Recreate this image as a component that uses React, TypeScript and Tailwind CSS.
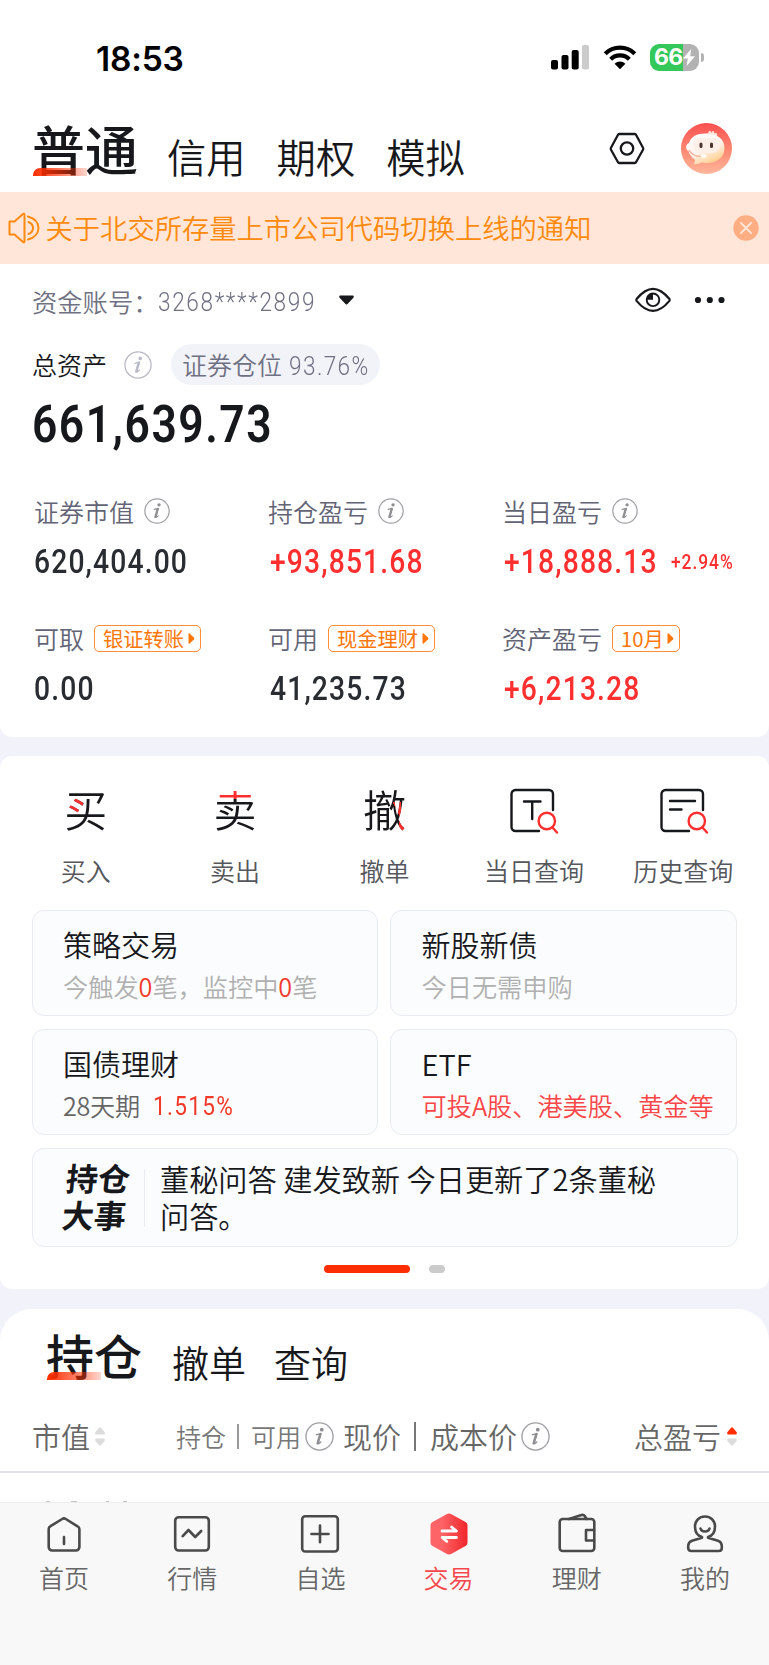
import React from "react";

const CJK = "font-['Noto_Sans_CJK_SC',sans-serif]";

function Num({ children, box, cls }: { children: string; box: string; cls: string }) {
  return (
    <span className={`block shrink-0 ${box}`}>
      <span className={`block w-max origin-left whitespace-nowrap font-[Roboto,sans-serif] leading-none ${cls}`}>{children}</span>
    </span>
  );
}

function Info({ cls, stroke = "#a0a0a4", fill = "#8e8e92" }: { cls: string; stroke?: string; fill?: string }) {
  return (
    <svg viewBox="0 0 28 28" className={`shrink-0 ${cls}`} fill="none">
      <circle cx="14" cy="14" r="13.1" stroke={stroke} strokeWidth="1.3" />
      <circle cx="16.2" cy="7.4" r="1.8" fill={fill} />
      <path d="M11 12.3c1.5-.2 3-.8 4.4-1.2l-2.6 8.6c-.3 1.2.3 1.400 1 .9l1.500-1.400" stroke={fill} strokeWidth="1.3" strokeLinecap="round" strokeLinejoin="round" />
      <path d="M14.800 11.800 12.200 20.500" stroke={fill} strokeWidth="2.400" strokeLinecap="round" />
    </svg>
  );
}

function StatusBar() {
  return (
    <div className="flex h-[115px] items-start pt-[40px]">
      <div className="ml-[96px] w-[120px] pt-px font-[Inter,sans-serif] text-[33.5px] leading-[36px] font-semibold tracking-[-0.2px] text-black">18:53</div>
      <svg className="mt-[5px] ml-[335px] h-[25px] w-[39px]" viewBox="0 0 39 25">
        <rect x="0" y="15" width="7" height="9.5" rx="2" />
        <rect x="10.5" y="10" width="7" height="14.5" rx="2" />
        <rect x="20.7" y="5" width="7" height="19.5" rx="2" />
        <rect x="31" y="0" width="7" height="24.5" rx="2" fill="#cbcbcb" />
      </svg>
      <svg className="mt-[5px] ml-[13px] h-[25px] w-[34px]" viewBox="0 0 34 25" fill="none" stroke="#000">
        <path d="M2.2 8.7a21 21 0 0 1 29.6 0" strokeWidth="4.2" />
        <path d="M7.7 14.2a13.2 13.2 0 0 1 18.6 0" strokeWidth="4.2" />
        <path d="M17 24.2l-5.4-5.5a7.7 7.7 0 0 1 10.8 0z" fill="#000" stroke="none" />
      </svg>
      <div className="mt-[4px] ml-[13px] flex h-[27px] items-center">
        <div className="flex h-[27px] w-[49px] items-center overflow-hidden rounded-[9px] bg-[linear-gradient(90deg,#34c759_0_33px,#b2b2b2_33px)] pl-[4px]">
          <span className="font-[Inter,sans-serif] text-[23px] leading-none font-bold tracking-[-0.8px] text-white">66</span>
          <svg className="ml-[1px] h-[17px] w-[12px]" viewBox="0 0 12 17">
            <path d="M8.2 0 0 9.6h4.8L3.6 17 12 7.2H7.2z" fill="#fff" />
          </svg>
        </div>
        <div className="ml-[2px] h-[9px] w-[2.5px] rounded-r-full bg-[#b2b2b2]" />
      </div>
    </div>
  );
}

function Header() {
  return (
    <div className="flex h-[77px] items-start">
      <div className="relative ml-[32px] h-[64px] w-[106px] shrink-0">
        <div className="pt-[6px] text-[53px] leading-[54px] font-medium text-[#17181c]">普通</div>
        <div className="absolute top-[53px] left-[1px] h-[8px] w-[54px] rounded-tl-[7px] bg-[linear-gradient(90deg,#ff2d00,#ff2d0099_55%,#ff2d0030)]" />
      </div>
      <div className="mt-[21px] ml-[29px] flex gap-[31px] text-[39.3px] leading-[40px] font-[350] text-[#17181c]">
        <span>信用</span>
        <span>期权</span>
        <span>模拟</span>
      </div>
      <svg className="mt-[17px] ml-[144px] h-[34px] w-[36px] shrink-0" viewBox="0 0 36 34" fill="none" stroke="#17181c" strokeWidth="2.3" strokeLinejoin="round">
        <path d="M10.2 2h15.6a1.5 1.5 0 0 1 1.2.8l7 12.9a2 2 0 0 1 0 2l-7 12.5a1.5 1.5 0 0 1-1.2.8H10.2a1.5 1.5 0 0 1-1.2-.8L2 17.700a2 2 0 0 1 0-2L9 2.800A1.500 1.500 0 0 1 10.200 2z" />
        <circle cx="18" cy="16.500" r="6.200" />
      </svg>
      <svg className="mt-[8px] ml-[36px] h-[51px] w-[51px] shrink-0" viewBox="0 0 51 51">
        <defs>
          <linearGradient id="av" x1="0" y1="0" x2="0" y2="1">
            <stop offset="0" stopColor="#fb4f4f" />
            <stop offset=".55" stopColor="#ff8a74" />
            <stop offset="1" stopColor="#ffb79c" />
          </linearGradient>
          <linearGradient id="face" x1="0" y1="0" x2=".6" y2="1">
            <stop offset="0" stopColor="#fff" />
            <stop offset=".6" stopColor="#fff3ee" />
            <stop offset="1" stopColor="#ffd08f" />
          </linearGradient>
        </defs>
        <circle cx="25.500" cy="25.500" r="25.500" fill="url(#av)" />
        <path d="M25 13c0-3 1.500-3.500 2-1.500.3-4 2.500-5 3.300-1.500 1.200-3 3.200-2.500 3 .5 2-1 3.500 0 2.700 2.500z" fill="#ffe3da" />
        <path d="M24 10.500c12 0 19.500 5 19.500 14.500S36 40 25 40c-2 0-3.500-.2-5-.5-2 1.500-4.500 2-7.500 1.500 1-1 1.500-2.500 1.500-4C10.500 34 8 31 7.500 28c-3-1-3.500-6.500.5-8 2-6.500 8-9.500 16-9.500z" fill="url(#face)" />
        <rect x="12" y="15" width="27" height="15" rx="7.500" fill="#ffefe9" />
        <rect x="18.500" y="19.500" width="3" height="5.500" rx="1.500" fill="#4a3330" />
        <rect x="29" y="19.500" width="3" height="5.500" rx="1.500" fill="#4a3330" />
        <path d="M8 27c2 4 7 7 14 6.500" stroke="#ffab94" strokeWidth="1.300" fill="none" />
        <ellipse cx="22.500" cy="33" rx="3" ry="1.700" fill="#fff" />
      </svg>
    </div>
  );
}

function Notice() {
  return (
    <div className="flex h-[72px] items-center bg-[#ffe6d8]">
      <svg className="ml-[8px] h-[32px] w-[32px] shrink-0" viewBox="0 0 32 32" fill="none" stroke="#ff8a0c" strokeWidth="2" strokeLinejoin="round" strokeLinecap="round">
        <path d="M1.500 9.500h5L15 2c.8-.6 1.500-.3 1.500.6v26.800c0 .9-.7 1.200-1.500.6l-8.500-7.500h-5z" />
        <path d="M20 4.500c14 4 14 19 0 23M20.500 10c6 2.500 6 9.500 0 12" />
      </svg>
      <span className="ml-[5.500px] pb-px text-[27.300px] leading-none font-[350] whitespace-nowrap text-[#ff8a0c]">关于北交所存量上市公司代码切换上线的通知</span>
      <svg className="mr-[10px] ml-auto h-[26px] w-[26px] shrink-0" viewBox="0 0 26 26">
        <circle cx="13" cy="13" r="12.700" fill="#ffad82" />
        <path d="M8 8l10 10M18 8 8 18" stroke="#ffe6d8" strokeWidth="1.900" strokeLinecap="round" />
      </svg>
    </div>
  );
}

const Play = () => (
  <svg className="h-[11px] w-[7px] shrink-0" viewBox="0 0 7 11">
    <path d="M.5 1v9c0 .7.700.900 1.200.5l4.400-4.300a1 1 0 0 0 0-1.400L1.700.5C1.200.1.500.300.500 1z" fill="#ff7708" />
  </svg>
);

function Tag({ children, cls }: { children: React.ReactNode; cls: string }) {
  return (
    <span className={`ml-[10px] flex h-[27px] items-center justify-between rounded-[5px] border border-[#ff8d38] pr-[5px] pl-[8px] text-[20.300px] leading-none font-normal text-[#ff7708] ${cls}`}>
      {children}
      <Play />
    </span>
  );
}

const LABEL = "flex items-center whitespace-nowrap text-[25px] leading-none font-[350] text-[#626475]";
const VAL = "text-[32.5px] font-medium tracking-[1.300px] scale-x-[0.870]";

function Account() {
  return (
    <section className="h-[473px] rounded-b-[12px] bg-white">
      <div className="flex h-[76px] items-center pl-[32px] text-[25.300px] leading-none font-[350] text-[#6f7182]">
        <span className="w-[126px] whitespace-nowrap">资金账号：</span>
        <Num box="w-[156px]" cls="text-[26px] tracking-[1.850px] scale-x-[0.870] font-[350]">3268****2899</Num>
        <svg className="mb-[4px] ml-[25px] h-[10px] w-[15px]" viewBox="0 0 15 10">
          <path d="M1.500.5h12c1.200 0 1.700 1.300.9 2.200L9 8.600a2 2 0 0 1-3 0L.6 2.700C-.2 1.800.3.500 1.500.500z" fill="#17181c" />
        </svg>
        <svg className="mb-[4px] ml-[281px] h-[26px] w-[36px]" viewBox="0 0 36 26" fill="none" stroke="#17181c" strokeWidth="2.200">
          <path d="M1.800 11.700C6.500 6 11.500 1.800 18 1.800S29.500 6 34.200 11.700a2 2 0 0 1 0 2.400C29.500 19.800 24.500 23.800 18 23.800S6.500 19.800 1.800 14.100a2 2 0 0 1 0-2.400z" />
          <circle cx="18" cy="12.800" r="6.300" strokeWidth="1.900" />
          <path d="M18 6.500v6.300h-6.300A6.300 6.300 0 0 1 18 6.500z" fill="#17181c" stroke="none" />
        </svg>
        <svg className="mb-[4px] ml-[23px] h-[8px] w-[32px]" viewBox="0 0 32 8" fill="#17181c">
          <circle cx="4" cy="4" r="3.100" />
          <circle cx="15.800" cy="4" r="3.100" />
          <circle cx="27.500" cy="4" r="3.100" />
        </svg>
      </div>
      <div className="flex h-[49px] items-center pl-[32px] text-[25px] leading-none">
        <span className="w-[75px] font-[350] text-[#17181c]">总资产</span>
        <Info cls="ml-[17px] h-[28px] w-[28px]" stroke="#b9bac6" fill="#b9bac6" />
        <div className="ml-[19px] flex h-[41px] w-[209px] items-center rounded-full bg-[#f2f3f9] pl-[11px] font-[350] text-[#6f7182]">
          <span>证券仓位</span>
          <Num box="ml-[7px] w-[80px] pt-[3px]" cls="text-[26px] tracking-[1.600px] scale-x-[0.870] font-[350]">93.76%</Num>
        </div>
      </div>
      <div className="flex h-[70px] items-center pl-[32px]">
        <Num box="w-[260px]" cls="text-[51px] tracking-[1.750px] scale-x-[0.870] font-semibold text-[#17181c]">661,639.73</Num>
      </div>
      <div className="grid grid-cols-[234px_234px_1fr] pt-[36px] pl-[34px] text-[#292c30]">
        <div className={`h-[32px] ${LABEL}`}>证券市值<Info cls="ml-[10px] h-[26px] w-[26px]" /></div>
        <div className={`h-[32px] ${LABEL}`}>持仓盈亏<Info cls="ml-[10px] h-[26px] w-[26px]" /></div>
        <div className={`h-[32px] ${LABEL}`}>当日盈亏<Info cls="ml-[10px] h-[26px] w-[26px]" /></div>
        <div className="flex h-[66px] items-center pt-[4px]"><Num box="w-[160px]" cls={VAL}>620,404.00</Num></div>
        <div className="flex h-[66px] items-center pt-[4px] text-[#ff2f2f]"><Num box="ml-[2px] w-[160px]" cls={VAL}>+93,851.68</Num></div>
        <div className="flex h-[66px] items-center pt-[4px] text-[#ff2f2f]">
          <Num box="ml-[2px] w-[160px]" cls={VAL}>+18,888.13</Num>
          <Num box="ml-[7px] w-[60px]" cls="text-[20px] tracking-[1.100px] scale-x-[0.870] font-medium">+2.94%</Num>
        </div>
        <div className={`mt-[26px] h-[38px] ${LABEL}`}>可取<Tag cls="w-[107px]">银证转账</Tag></div>
        <div className={`mt-[26px] h-[38px] ${LABEL}`}>可用<Tag cls="w-[107px]">现金理财</Tag></div>
        <div className={`mt-[26px] h-[38px] ${LABEL}`}>资产盈亏<Tag cls="w-[68px]">10月</Tag></div>
        <div className="flex h-[60px] items-center pt-[4px]"><Num box="w-[160px]" cls={VAL}>0.00</Num></div>
        <div className="flex h-[60px] items-center pt-[4px]"><Num box="ml-[2px] w-[160px]" cls={VAL}>41,235.73</Num></div>
        <div className="flex h-[60px] items-center pt-[4px] text-[#ff2f2f]"><Num box="ml-[2px] w-[160px]" cls={VAL}>+6,213.28</Num></div>
      </div>
    </section>
  );
}

function QueryIcon({ children }: { children: React.ReactNode }) {
  return (
    <svg className="h-[48px] w-[50px]" viewBox="0 0 50 48" fill="none" stroke="#17181c" strokeWidth="2.400" strokeLinecap="round">
      <path d="M30 43H6.500a4 4 0 0 1-4-4V6a4 4 0 0 1 4-4H40a4 4 0 0 1 4 4v16" />
      {children}
      <g stroke="#ff2f2f">
        <circle cx="37.800" cy="33" r="8.200" />
        <path d="M43.500 39.500 48 44.500" />
      </g>
    </svg>
  );
}

const GLYPH = "h-[46px] bg-clip-text text-[43px] leading-[40px] font-[350] text-transparent";

function Actions() {
  return (
    <div className="grid grid-cols-5 px-[11px] pt-[32px] text-center text-[25px] leading-none font-[350] text-[#55575c]">
      <div>
        <div className={`mx-auto w-[43px] ${GLYPH} bg-[linear-gradient(#ff2f2f,#ff2f2f),linear-gradient(#17181c,#17181c)] bg-[size:19px_15px,100%_100%] bg-[position:0px_9px,0px_0px] bg-no-repeat`}>买</div>
        <div className="pt-[24px]">买入</div>
      </div>
      <div>
        <div className={`mx-auto w-[43px] ${GLYPH} bg-[linear-gradient(#ff2f2f_0_11px,#17181c_11px)]`}>卖</div>
        <div className="pt-[24px]">卖出</div>
      </div>
      <div>
        <div className={`mx-auto w-[43px] ${GLYPH} bg-[linear-gradient(#ff2f2f,#ff2f2f),linear-gradient(64deg,transparent_50%,#ff2f2f_50%),linear-gradient(#17181c,#17181c)] bg-[size:8px_14px,9px_16px,100%_100%] bg-[position:36px_29px,29px_14px,0px_0px] bg-no-repeat`}>撤</div>
        <div className="pt-[24px]">撤单</div>
      </div>
      <div>
        <div className="flex h-[48px] justify-center pl-[1px]">
          <QueryIcon><path d="M15 13.500h16.500M23.200 13.500V31" /></QueryIcon>
        </div>
        <div className="pt-[22px]">当日查询</div>
      </div>
      <div>
        <div className="flex h-[48px] justify-center pl-[1px]">
          <QueryIcon><path d="M11 13H36M11 21.500h11.500" /></QueryIcon>
        </div>
        <div className="pt-[22px]">历史查询</div>
      </div>
    </div>
  );
}

function Card({ title, children }: { title: string; children: React.ReactNode }) {
  return (
    <div className="h-[106px] rounded-[12px] border border-[#e9eaf2] bg-[#fbfcfe] pt-[17px] pl-[30.500px] whitespace-nowrap">
      <div className="text-[29px] leading-[32px] font-[350] text-[#17181c]">{title}</div>
      <div className="mt-[10px] text-[25.200px] leading-[32px] font-[350]">{children}</div>
    </div>
  );
}

function Services() {
  return (
    <section className="mt-[19px] h-[533px] rounded-[12px] bg-white">
      <Actions />
      <div className="mt-[27px] ml-[31.500px] grid w-[705px] grid-cols-2 gap-x-[12px] gap-y-[13px]">
        <Card title="策略交易">
          <span className="text-[#b0b0b0]">今触发<span className="text-[#f23a2a]">0</span>笔，监控中<span className="text-[#f23a2a]">0</span>笔</span>
        </Card>
        <Card title="新股新债"><span className="text-[#b0b0b0]">今日无需申购</span></Card>
        <Card title="国债理财">
          <div className="flex items-center text-[#666]">
            <span className="w-[78px] tracking-[-0.300px]">28天期</span>
            <Num box="ml-[12px] w-[90px] pt-[2px]" cls="text-[26px] tracking-[1.500px] scale-x-[0.870] font-normal text-[#f23a2a]">1.515%</Num>
          </div>
        </Card>
        <Card title="ETF"><span className="text-[#fa4646]">可投A股、港美股、黄金等</span></Card>
      </div>
      <div className="mt-[13px] ml-[32px] flex h-[99px] w-[706px] items-center rounded-[12px] border border-[#e9eaf2] bg-[#fbfcfe]">
        <div className="ml-[31px] w-[66px] -skew-x-[6deg] pb-[3px] text-[32px] leading-[37px] font-bold text-[#17181c]">持仓大事</div>
        <div className="ml-[14px] h-[58px] w-px bg-[#e9eaf2]" />
        <div className="ml-[15px] w-[510px] pb-[2px] text-[29.200px] leading-[37px] font-[350] text-[#17181c]">董秘问答 建发致新 今日更新了2条董秘问答。</div>
      </div>
      <div className="mt-[18px] ml-[324px] flex gap-[19px]">
        <div className="h-[8px] w-[86px] rounded-full bg-[#ff2d00]" />
        <div className="h-[8px] w-[16px] rounded-full bg-[#cbcbcb]" />
      </div>
    </section>
  );
}

function Sort({ up, cls }: { up: string; cls: string }) {
  return (
    <svg className={`h-[19px] w-[10px] shrink-0 ${cls}`} viewBox="0 0 10 19">
      <path d="M4 .7a1.500 1.500 0 0 1 2 0L9.500 5c.7 1.200.3 2.500-1 2.500h-7C.2 7.500-.2 6.200.5 5z" fill={up} />
      <path d="M4 18.300a1.500 1.500 0 0 0 2 0L9.500 14c.7-1.200.3-2.500-1-2.500h-7c-1.300 0-1.700 1.300-1 2.500z" fill="#dcdcdc" />
    </svg>
  );
}

function Positions() {
  return (
    <section className="mt-[20px] h-[193px] rounded-t-[32px] bg-white">
      <div className="flex h-[92px] items-start">
        <div className="relative ml-[46px] w-[98px]">
          <div className="pt-[17px] text-[48px] leading-[56px] font-medium text-[#17181c]">持仓</div>
          <div className="absolute top-[63px] left-[1px] h-[8px] w-[54px] rounded-tl-[7px] bg-[linear-gradient(90deg,#ff2d00,#ff2d0099_55%,#ff2d0030)]" />
        </div>
        <div className="mt-[35px] ml-[28px] flex gap-[28px] text-[37px] leading-[37px] font-[350] text-[#17181c]">
          <span>撤单</span>
          <span>查询</span>
        </div>
      </div>
      <div className="flex h-[72px] items-center border-b-2 border-[#e2e2ec] text-[29px] leading-none font-[350] whitespace-nowrap text-[#666]">
        <span className="ml-[32px] w-[58px]">市值</span>
        <Sort cls="ml-[5px]" up="#dcdcdc" />
        <span className="ml-[71px] w-[50px] text-[25px] text-[#777]">持仓</span>
        <span className="ml-[11px] h-[25px] w-[2px] bg-[#999]" />
        <span className="ml-[12px] w-[50px] text-[25px] text-[#777]">可用</span>
        <Info cls="ml-[4px] h-[29px] w-[29px]" />
        <span className="ml-[9px] w-[58px]">现价</span>
        <span className="ml-[13px] h-[29px] w-[2px] bg-[#777]" />
        <span className="ml-[14px] w-[87px]">成本价</span>
        <Info cls="ml-[4px] h-[29px] w-[29px]" />
        <span className="ml-[84px] w-[87px]">总盈亏</span>
        <Sort cls="ml-[6px]" up="#ff2d00" />
      </div>
      <svg className="mt-[28px] h-[1px] w-full" viewBox="0 0 769 1" fill="#c4c4c8">
        <rect x="46" width="4" height="1" />
        <rect x="71" width="6" height="1" />
        <rect x="106" width="3" height="1" />
        <rect x="123" width="4" height="1" />
      </svg>
    </section>
  );
}

const NAV: { label: string; icon: React.ReactNode }[] = [
  { label: "首页", icon: <path d="M6.500 15.200 18.200 8a3.400 3.400 0 0 1 3.600 0l11.800 7.400a3 3 0 0 1 1.800 2.600V36a3.500 3.500 0 0 1-3.500 3.500H8.200A3.500 3.500 0 0 1 4.700 36V17.800a3 3 0 0 1 1.800-2.600zM20 26v7" /> },
  { label: "行情", icon: <><rect x="3.200" y="6.200" width="33.600" height="33.300" rx="3.500" /><path d="m10.700 25.200 5.800-6.200 6.700 7 6-6" /></> },
  { label: "自选", icon: <><rect x="2.200" y="5.200" width="35.600" height="35.300" rx="3" /><path d="M20 14.500v16.800M11.500 23h17" /></> },
  {
    label: "交易",
    icon: (
      <>
        <path d="M17.500 3.200a5 5 0 0 1 5 0l14 7.800a4 4 0 0 1 2 3.300v17.400a4 4 0 0 1-2 3.300l-14 7.800a5 5 0 0 1-5 0l-14-7.800a4 4 0 0 1-2-3.300V14.300a4 4 0 0 1 2-3.300z" fill="url(#hex)" stroke="none" />
        <path d="M13 20h14.500l-5-4M27.500 26.500H13.200l4.600 3.800" stroke="#fff" strokeWidth="2.800" />
      </>
    ),
  },
  { label: "理财", icon: <><rect x="2.700" y="8" width="34.600" height="32" rx="3" /><path d="M37 19h-8v10.500h8M12 8l12.500-4a3 3 0 0 1 3.300 1L29.500 8" /></> },
  { label: "我的", icon: <path d="M17 26.800v-.8c-5-1.300-7-5.500-7-10.500C10 9.500 14.500 5.500 20 5.500s10 4 10 10c0 5-2 9.200-7 10.500v.8l10 3c3 1 3.800 3 3.800 5.700v1.500c0 1.900-1.200 3-3 3H6.200c-1.800 0-3-1.100-3-3v-1.500c0-2.700.8-4.700 3.800-5.700zM15.500 17.500c1 4 8 4 9 0" /> },
];

function TabBar() {
  return (
    <nav className="grid h-[163px] grid-cols-6 border-t border-[#ececec] bg-[#f8f8f8] text-center">
      {NAV.map((n, i) => (
        <div key={n.label} className="flex flex-col items-center">
          <svg className="mt-[8px] h-[48px] w-[40px]" viewBox="0 0 40 48" fill="none" stroke="#4a4a4a" strokeWidth="2.600" strokeLinecap="round" strokeLinejoin="round">
            <defs>
              <linearGradient id="hex">
                <stop offset=".3" stopColor="#fc6468" />
                <stop offset="1" stopColor="#f0262a" />
              </linearGradient>
            </defs>
            {n.icon}
          </svg>
          <div className={`mt-[6px] text-[25px] leading-none font-[350] ${i === 3 ? "text-[#f5484d]" : "text-[#666]"}`}>{n.label}</div>
        </div>
      ))}
    </nav>
  );
}

export default function App() {
  return (
    <div className={`h-[1665px] w-[769px] overflow-hidden bg-[#f2f3fa] ${CJK}`}>
      <div className="bg-white">
        <StatusBar />
        <Header />
        <Notice />
      </div>
      <Account />
      <Services />
      <Positions />
      <TabBar />
    </div>
  );
}
